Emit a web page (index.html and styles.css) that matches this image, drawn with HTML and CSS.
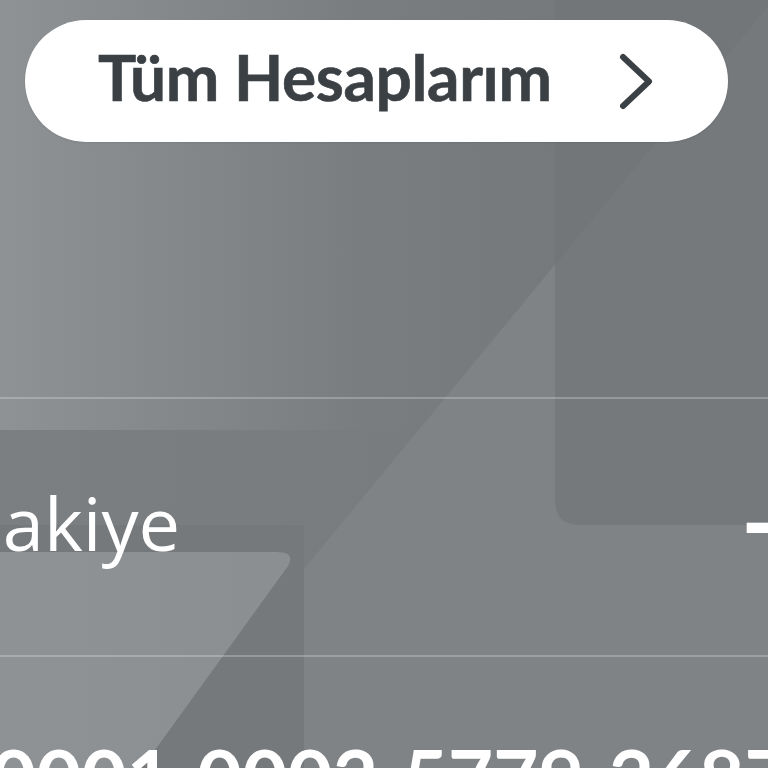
FILE: index.html
```html
<!DOCTYPE html>
<html lang="tr">
<head>
<meta charset="utf-8">
<title>Hesaplarım</title>
<link rel="stylesheet" href="styles.css">
</head>
<body>
<div class="stage">
  <svg class="bg" width="768" height="768" viewBox="0 0 768 768" aria-hidden="true">
    <defs>
      <linearGradient id="gTop" x1="0" y1="0" x2="1" y2="0">
        <stop offset="0" stop-color="#8e9295"/>
        <stop offset="0.65" stop-color="#797d80"/>
        <stop offset="1" stop-color="#75797c"/>
      </linearGradient>
      <linearGradient id="gLow" x1="0" y1="0" x2="1" y2="0">
        <stop offset="0" stop-color="#7b7f82"/>
        <stop offset="1" stop-color="#76797c"/>
      </linearGradient>
      <linearGradient id="gPar" x1="0" y1="0" x2="1" y2="0">
        <stop offset="0" stop-color="#8e9295"/>
        <stop offset="1" stop-color="#8b8f92"/>
      </linearGradient>
      <clipPath id="leftOfLine">
        <polygon points="0,0 773,0 140,768 0,768"/>
      </clipPath>
    </defs>
    <rect x="0" y="0" width="768" height="768" fill="#7f8386"/>
    <g clip-path="url(#leftOfLine)">
      <rect x="0" y="0" width="768" height="768" fill="url(#gLow)"/>
      <rect x="0" y="0" width="560" height="430" fill="url(#gTop)"/>
    </g>
    <path d="M555 0 H768 V525 H580 Q555 525 555 500 Z" fill="#75797c"/>
    <polygon points="555,0 773,0 555,265" fill="#727679"/>
    <rect x="0" y="525" width="304" height="243" fill="#76797c"/>
    <path d="M0 552 H276 Q296 552 288 566 L142 768 H0 Z" fill="url(#gPar)"/>
  </svg>

  <div class="card">
    <div class="top">
      <a class="pill" href="#">
        <span class="pill-text">Tüm Hesaplarım</span>
        <svg class="chev" width="34" height="57" viewBox="0 0 34 57" aria-hidden="true">
          <polyline points="4,4 30,28.5 4,53" fill="none" stroke="#3b4045" stroke-width="6" stroke-linecap="round" stroke-linejoin="round"/>
        </svg>
      </a>
    </div>
    <div class="row balance">
      <span class="label">Bakiye</span>
      <span class="value">–</span>
    </div>
    <div class="row number">0001 0002 5779 2687</div>
  </div>
</div>
</body>
</html>
```

FILE: styles.css
```css
html, body {
  margin: 0;
  padding: 0;
}

body {
  width: 768px;
  height: 768px;
  overflow: hidden;
  background: #7f8386;
  font-family: Lato, "Open Sans", "Liberation Sans", sans-serif;
}

.stage {
  position: relative;
  width: 768px;
  height: 768px;
  overflow: hidden;
}

.bg {
  position: absolute;
  top: 0;
  left: 0;
  z-index: 0;
}

.card {
  position: relative;
  z-index: 1;
  width: 850px;
  margin-left: -42px;
  display: flex;
  flex-direction: column;
}

.top {
  padding: 20px 80px 0 67px;
  height: 377px;
}

.pill {
  height: 122px;
  border-radius: 61px;
  background: #ffffff;
  display: flex;
  align-items: center;
  justify-content: space-between;
  padding: 0 75px 0 73px;
  text-decoration: none;
  box-shadow: 0 1px 2px rgba(0, 0, 0, 0.08);
}

.pill-text {
  font-size: 64px;
  font-weight: 700;
  line-height: 1;
  color: #3b4045;
  margin-bottom: 8px;
  letter-spacing: -0.4px;
  -webkit-text-stroke: 0.6px #3b4045;
}

.chev {
  display: block;
  flex: none;
}

.row {
  border-top: 2px solid rgba(255, 255, 255, 0.24);
}

.balance {
  height: 256px;
  box-sizing: content-box;
  display: flex;
  justify-content: space-between;
  align-items: flex-start;
  color: #ffffff;
  font-family: "Open Sans", Lato, sans-serif;
}

.label {
  font-size: 74px;
  font-weight: 400;
  line-height: 1;
  padding-top: 87px;
  margin-left: -3px;
}

.value {
  font-size: 76px;
  font-weight: 800;
  line-height: 1;
  padding-top: 82px;
  padding-right: 26px;
}

.number {
  padding: 81px 0 0 33px;
  font-size: 78px;
  font-weight: 700;
  line-height: 1;
  color: #ffffff;
  white-space: nowrap;
  word-spacing: 6px;
}
```
